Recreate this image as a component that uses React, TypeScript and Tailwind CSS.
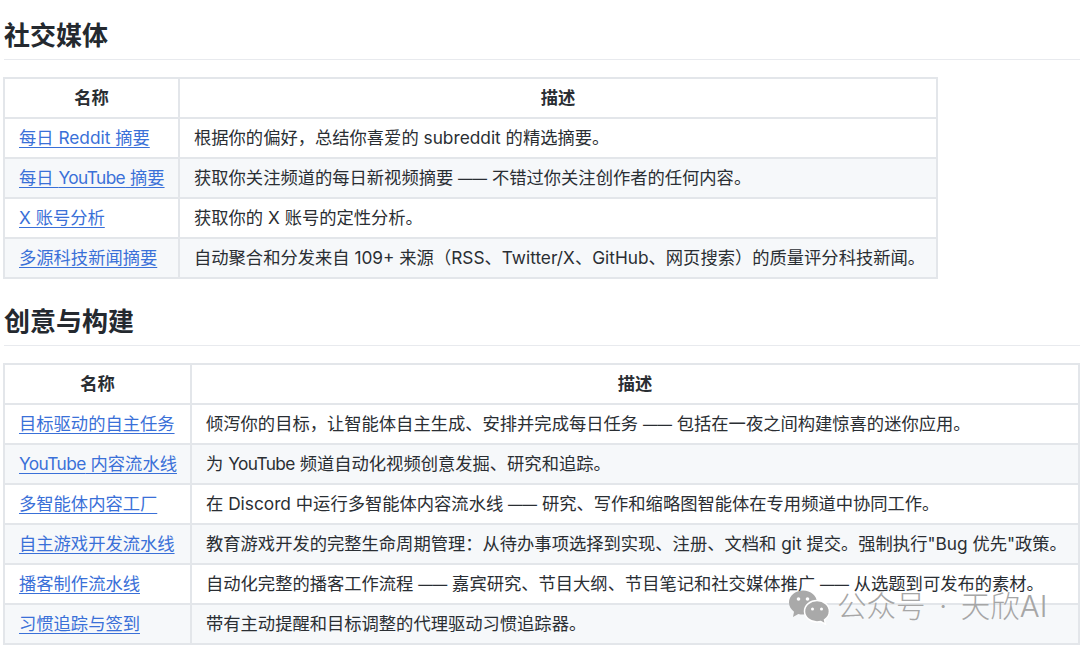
const font = { fontFamily: '"Inter", "Noto Sans CJK SC", sans-serif' };

interface Row {
  name: string;
  desc: string;
}

const social: Row[] = [
  { name: "每日 Reddit 摘要", desc: "根据你的偏好，总结你喜爱的 subreddit 的精选摘要。" },
  { name: "每日 YouTube 摘要", desc: "获取你关注频道的每日新视频摘要 —— 不错过你关注创作者的任何内容。" },
  { name: "X 账号分析", desc: "获取你的 X 账号的定性分析。" },
  { name: "多源科技新闻摘要", desc: "自动聚合和分发来自 109+ 来源（RSS、Twitter/X、GitHub、网页搜索）的质量评分科技新闻。" },
];

const creative: Row[] = [
  { name: "目标驱动的自主任务", desc: "倾泻你的目标，让智能体自主生成、安排并完成每日任务 —— 包括在一夜之间构建惊喜的迷你应用。" },
  { name: "YouTube 内容流水线", desc: "为 YouTube 频道自动化视频创意发掘、研究和追踪。" },
  { name: "多智能体内容工厂", desc: "在 Discord 中运行多智能体内容流水线 —— 研究、写作和缩略图智能体在专用频道中协同工作。" },
  { name: "自主游戏开发流水线", desc: "教育游戏开发的完整生命周期管理：从待办事项选择到实现、注册、文档和 git 提交。强制执行\"Bug 优先\"政策。" },
  { name: "播客制作流水线", desc: "自动化完整的播客工作流程 —— 嘉宾研究、节目大纲、节目笔记和社交媒体推广 —— 从选题到可发布的素材。" },
  { name: "习惯追踪与签到", desc: "带有主动提醒和目标调整的代理驱动习惯追踪器。" },
];

// em dashes and "YouTube" run wider in the installed fonts than in the reference
const Fitted = ({ text }: { text: string }) => (
  <>
    {text.split(/(——|YouTube)/).map((part, i) => {
      if (part === "——") return <span key={i} className="text-[14.5px]">{part}</span>;
      if (part === "YouTube") return <span key={i} className="tracking-[-0.6px]">{part}</span>;
      return <span key={i}>{part}</span>;
    })}
  </>
);

const Section = ({ title, rows, tableW, colW }: { title: string; rows: Row[]; tableW: string; colW: string }) => (
  <section>
    <h2 className="h-[43px] border-b border-[#e8eaee] ml-[4px] text-[26px] leading-[38px] font-semibold text-[#24292f]">{title}</h2>
    <table className={`mt-[17px] ml-[3px] border-collapse table-fixed text-[17.3px] text-[#2a2e33] ${tableW}`}>
      <thead>
        <tr className="h-[40px] bg-white">
          <th className={`border-2 border-[#e3e6ea] font-semibold text-center ${colW}`}>名称</th>
          <th className="border-2 border-[#e3e6ea] font-semibold text-center">描述</th>
        </tr>
      </thead>
      <tbody>
        {rows.map((row, i) => (
          <tr key={row.name} className={`h-[40px] ${i % 2 === 1 ? "bg-[#f6f8fa]" : "bg-white"}`}>
            <td className="border-2 border-[#e3e6ea] px-[14px] whitespace-nowrap">
              <a className="text-[#3a70d8] underline underline-offset-[3px]">
                <Fitted text={row.name} />
              </a>
            </td>
            <td className="border-2 border-[#e3e6ea] px-[14px] whitespace-nowrap">
              <Fitted text={row.desc} />
            </td>
          </tr>
        ))}
      </tbody>
    </table>
  </section>
);

const App = () => {
  return (
    <div className="relative w-[1080px] h-[649px] overflow-hidden bg-white pt-[17px]" style={font}>
      <Section title="社交媒体" rows={social} tableW="w-[935px]" colW="w-[175px]" />
      <div className="h-[24px]" />
      <Section title="创意与构建" rows={creative} tableW="w-[1077px]" colW="w-[187px]" />
      <div className="absolute left-[789px] top-[587px] flex items-center gap-[7px] text-[#a6a6a6]">
        <svg width="41" height="36" viewBox="0 0 41 36" className="mt-[2px]">
          <path d="M14 1.500C6.300 1.500 0 6.800 0 13.500c0 3.700 2 7 5 9.200L4 28l5.300-3c1.500.4 3 .6 4.700.6 7.700 0 14-5.400 14-12.100S21.700 1.500 14 1.500z" fill="#a9a9a9" />
          <path d="M28 11.500c-6.800 0-12.500 4.700-12.500 10.700S21.200 33 28 33c1.300 0 2.600-.2 3.800-.5l4.700 2.700-1-4.400c3-2 4.900-5 4.900-8.600 0-6-5.600-10.700-12.400-10.700z" fill="#a9a9a9" stroke="#ffffff" strokeWidth="1.500" />
          <circle cx="9.500" cy="10" r="1.800" fill="#fff" />
          <circle cx="18.500" cy="10" r="1.800" fill="#fff" />
          <circle cx="23.500" cy="20" r="1.500" fill="#fff" />
          <circle cx="32.500" cy="20" r="1.500" fill="#fff" />
        </svg>
        <span className="text-[29.500px] leading-[36px] font-light whitespace-nowrap">
          公众号<span className="mx-[13.5px]">·</span>天欣AI
        </span>
      </div>
    </div>
  );
};

export default App;
